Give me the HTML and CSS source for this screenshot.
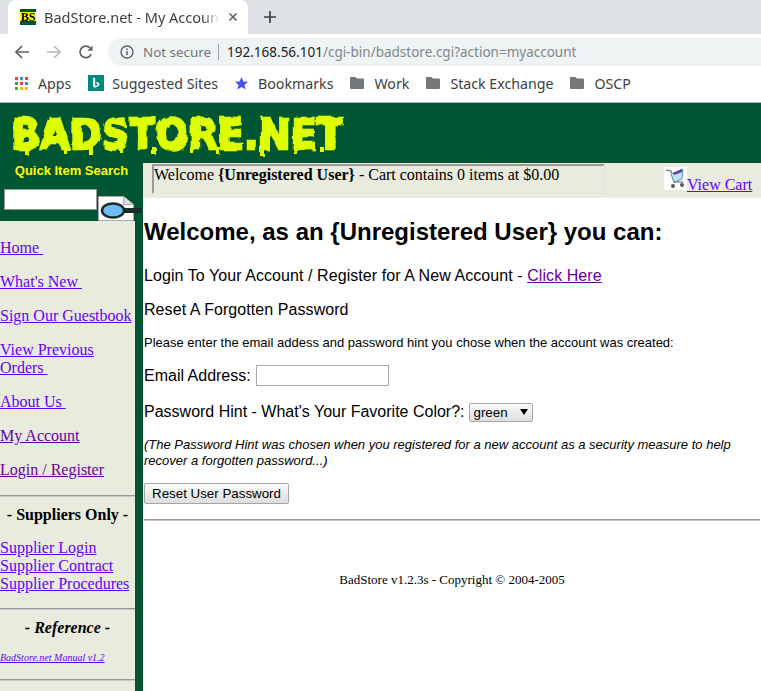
FILE: index.html

```html
<!DOCTYPE html>
<html lang="en">
<head>
    <meta charset="UTF-8">
    <title>BadStore.net - My Account</title>
    <link rel="stylesheet" href="styles.css">
</head>
<body>
    <div class="chrome">
        <div class="tabstrip">
            <div class="tab">
                <span class="favicon">BS</span>
                <span class="tab-title">BadStore.net - My Account</span>
                <svg class="tab-close" width="10" height="10" viewBox="0 0 10 10"><path d="M1.5 1.5l7 7M8.5 1.5l-7 7" stroke="#5f6368" stroke-width="1.6" fill="none"/></svg>
            </div>
            <svg class="new-tab" width="14" height="14" viewBox="0 0 14 14"><path d="M7 1v12M1 7h12" stroke="#3c4043" stroke-width="1.7" fill="none"/></svg>
        </div>
        <div class="toolbar">
            <svg class="nav-icon" width="16" height="16" viewBox="0 0 16 16"><path d="M15 8H2M8 2L2 8l6 6" stroke="#5f6368" stroke-width="1.7" fill="none"/></svg>
            <svg class="nav-icon" width="16" height="16" viewBox="0 0 16 16"><path d="M1 8h13M8 2l6 6-6 6" stroke="#b6b8bb" stroke-width="1.7" fill="none"/></svg>
            <svg class="nav-icon" width="16" height="16" viewBox="0 0 16 16"><path d="M13.2 10.2A5.8 5.8 0 1 1 12.2 4" stroke="#5f6368" stroke-width="1.7" fill="none"/><path d="M14.5 1.5v5.2H9.3z" fill="#5f6368"/></svg>
            <div class="omnibox">
                <svg width="14" height="14" viewBox="0 0 14 14"><circle cx="7" cy="7" r="6" stroke="#5f6368" stroke-width="1.4" fill="none"/><path d="M7 6v4.2" stroke="#5f6368" stroke-width="1.5"/><circle cx="7" cy="4.1" r=".9" fill="#5f6368"/></svg>
                <span class="not-secure">Not secure</span>
                <span class="omni-sep"></span>
                <span class="url"><b>192.168.56.101</b>/cgi-bin/badstore.cgi?action=myaccount</span>
            </div>
        </div>
        <div class="bookmarks">
            <span class="bookmark">
                <svg width="13" height="13" viewBox="0 0 13 13">
                    <rect x="0" y="0" width="3" height="3" fill="#ea4335"/><rect x="5" y="0" width="3" height="3" fill="#4285f4"/><rect x="10" y="0" width="3" height="3" fill="#ea4335"/>
                    <rect x="0" y="5" width="3" height="3" fill="#34a853"/><rect x="5" y="5" width="3" height="3" fill="#ea4335"/><rect x="10" y="5" width="3" height="3" fill="#4285f4"/>
                    <rect x="0" y="10" width="3" height="3" fill="#34a853"/><rect x="5" y="10" width="3" height="3" fill="#fbbc05"/><rect x="10" y="10" width="3" height="3" fill="#fbbc05"/>
                </svg>
                Apps
            </span>
            <span class="bookmark bing">
                <svg width="16" height="16" viewBox="0 0 16 16"><rect width="16" height="16" fill="#00897b"/><path d="M5 2.5v9l2.2 1.3 4-2.4V8L8 6.8l1 2.4 1 .5-2.8 1.5V3.300z" fill="#fff"/></svg>
                Suggested Sites
            </span>
            <span class="bookmark">
                <svg width="13" height="13" viewBox="0 0 13 13"><path d="M6.500 0l1.900 4.400 4.600.4-3.500 3.100 1.100 4.700-4.100-2.500-4.100 2.500 1.100-4.700L0 4.800l4.600-.4z" fill="#4a4ff0"/></svg>
                Bookmarks
            </span>
            <span class="bookmark"><svg width="14" height="12" viewBox="0 0 14 12"><path d="M1 0h4.500l1.500 1.500h6a1 1 0 0 1 1 1V11a1 1 0 0 1-1 1H1a1 1 0 0 1-1-1V1a1 1 0 0 1 1-1z" fill="#74777a"/></svg>Work</span>
            <span class="bookmark"><svg width="14" height="12" viewBox="0 0 14 12"><path d="M1 0h4.500l1.500 1.500h6a1 1 0 0 1 1 1V11a1 1 0 0 1-1 1H1a1 1 0 0 1-1-1V1a1 1 0 0 1 1-1z" fill="#74777a"/></svg>Stack Exchange</span>
            <span class="bookmark"><svg width="14" height="12" viewBox="0 0 14 12"><path d="M1 0h4.500l1.500 1.500h6a1 1 0 0 1 1 1V11a1 1 0 0 1-1 1H1a1 1 0 0 1-1-1V1a1 1 0 0 1 1-1z" fill="#74777a"/></svg>OSCP</span>
        </div>
    </div>

    <div class="site">
        <div class="banner">
            <svg class="logo" width="345" height="52" viewBox="0 0 345 52">
                <defs>
                    <filter id="slime" x="-5%" y="-15%" width="110%" height="130%">
                        <feTurbulence type="fractalNoise" baseFrequency="0.08" numOctaves="2" seed="4"/>
                        <feDisplacementMap in="SourceGraphic" scale="5"/>
                    </filter>
                </defs>
                <g filter="url(#slime)" fill="#ddff00">
                    <text class="logo-text" x="9" y="38" textLength="332" lengthAdjust="spacingAndGlyphs">BADSTORE.NET</text>
                    <path d="M22 36h4v8h-4zM62 36h3v7h-3zM88 36h4v9h-4zM118 36h3v6h-3zM150 36h4v8h-4zM188 36h3v6h-3zM215 36h3v8h-3zM258 36h4v9h-4zM292 36h3v7h-3zM318 36h4v5h-4z"/>
                </g>
            </svg>
        </div>
        <div class="layout">
            <div class="left">
                <div class="search">
                    <div class="search-title">Quick Item Search</div>
                    <div class="search-row">
                        <input class="search-box" type="text">
                        <svg class="search-btn" width="44" height="25" viewBox="0 0 44 25">
                            <path d="M.5.5h25l10 8v16H.5z" fill="#fff" stroke="#aaa"/>
                            <path d="M25.500.5v8h10" fill="#ddd" stroke="#aaa"/>
                            <rect x="26" y="12" width="17" height="5" fill="#1c2a2a"/>
                            <ellipse cx="15" cy="14.500" rx="11" ry="7" fill="#6cbcf5" stroke="#1c2a2a" stroke-width="2.500"/>
                        </svg>
                    </div>
                </div>
                <nav class="sidebar">
                    <p><a href="#">Home&nbsp;</a></p>
                    <p><a href="#">What's New&nbsp;</a></p>
                    <p><a href="#">Sign Our Guestbook</a></p>
                    <p><a href="#">View Previous Orders&nbsp;</a></p>
                    <p><a href="#">About Us&nbsp;</a></p>
                    <p><a class="seen" href="#">My Account</a></p>
                    <p><a class="seen" href="#">Login / Register</a></p>
                    <hr>
                    <h4 class="side-head">- Suppliers Only -</h4>
                    <p class="side-list">
                        <a href="#">Supplier Login</a><br>
                        <a href="#">Supplier Contract</a><br>
                        <a href="#">Supplier Procedures</a>
                    </p>
                    <hr>
                    <h4 class="side-head ref">- Reference -</h4>
                    <p class="manual"><a href="#">BadStore.net Manual v1.2</a></p>
                    <hr>
                </nav>
            </div>
            <main class="main">
                <div class="welcome-bar">
                    <div class="welcome-box">Welcome <b>{Unregistered User}</b> - Cart contains 0 items at $0.00</div>
                    <div class="cart">
                        <svg width="23" height="23" viewBox="0 0 23 23">
                            <rect width="23" height="23" fill="#fff"/>
                            <path d="M2 3l5 1 3 11h9" stroke="#8a8f96" stroke-width="1.500" fill="none"/>
                            <path d="M7 7l12-5-1 10-8 3z" fill="#bfe6ef" stroke="#6d8fb0"/>
                            <path d="M9 6l9-4v3l-8 3z" fill="#5a3ab5"/>
                            <circle cx="9" cy="19" r="2" fill="#555"/><circle cx="18" cy="18" r="2" fill="#555"/>
                        </svg><a href="#">View Cart</a>
                    </div>
                </div>
                <div class="content">
                    <h1>Welcome, as an {Unregistered User} you can:</h1>
                    <p class="line">Login To Your Account / Register for A New Account - <a class="seen" href="#">Click Here</a></p>
                    <p class="line">Reset A Forgotten Password</p>
                    <p class="small">Please enter the email addess and password hint you chose when the account was created:</p>
                    <form>
                        <div class="field email-field">Email Address: <input class="email" type="text"></div>
                        <div class="field hint">Password Hint - What's Your Favorite Color?:
                            <span class="select-wrap"><select><option>green</option><option>blue</option><option>red</option></select></span>
                        </div>
                        <p class="note">(The Password Hint was chosen when you registered for a new account as a security measure to help recover a forgotten password...)</p>
                        <button type="button" class="reset">Reset User Password</button>
                    </form>
                    <hr class="main-rule">
                    <p class="footer">BadStore v1.2.3s - Copyright &copy; 2004-2005</p>
                </div>
            </main>
        </div>
    </div>
</body>
</html>
```

FILE: styles.css

```css
* {
    box-sizing: border-box;
}

html, body {
    height: 100%;
}

body {
    margin: 0;
    overflow: hidden;
    display: flex;
    flex-direction: column;
    font-family: "Liberation Serif", serif;
    font-size: 16px;
    color: #000;
    background: #fff;
}

/* browser chrome */
.chrome {
    flex: none;
    font-family: "Noto Sans", sans-serif;
    overflow: hidden;
}

.tabstrip {
    height: 34px;
    background: #dee1e6;
    display: flex;
    align-items: center;
}

.tab {
    width: 240px;
    height: 34px;
    margin-left: 8px;
    padding: 0 0 0 12px;
    background: #fff;
    border-radius: 8px 8px 0 0;
    display: flex;
    align-items: center;
}

.favicon {
    width: 16px;
    height: 16px;
    flex: none;
    color: #000;
    font: bold 12px/16px "Liberation Serif", serif;
    text-align: center;
    background: linear-gradient(#005533 3px, #ffff00 3px, #ffff00 12px, #005533 12px);
}

.tab-title {
    width: 176px;
    margin-left: 8px;
    font-size: 14.5px;
    color: #3c4043;
    white-space: nowrap;
    overflow: hidden;
    -webkit-mask-image: linear-gradient(to right, #000 90%, transparent);
    mask-image: linear-gradient(to right, #000 90%, transparent);
}

.tab-close {
    margin-left: 8px;
}

.new-tab {
    margin-left: 15px;
}

.toolbar {
    height: 33px;
    background: #fff;
    display: flex;
    align-items: center;
    padding: 3px 0 0 14px;
}

.nav-icon {
    margin-right: 16px;
    flex: none;
}

.omnibox {
    flex: 1;
    height: 28px;
    margin-left: -2px;
    margin-right: -20px;
    padding-left: 12px;
    background: #f0f3f4;
    border-radius: 14px 0 0 14px;
    display: flex;
    align-items: center;
    font-size: 13.5px;
    white-space: nowrap;
    color: #80868b;
}

.not-secure {
    margin-left: 9px;
    font-size: 13.4px;
    color: #70757a;
}

.omni-sep {
    width: 1px;
    height: 16px;
    margin: 0 8px 0 7px;
    background: #9aa0a6;
}

.url b {
    font-weight: 400;
    color: #202124;
}

.bookmarks {
    height: 36px;
    background: #fff;
    border-bottom: 1px solid #b5b5b5;
    display: flex;
    align-items: center;
    padding: 0 0 3px 15px;
    gap: 17px;
    font-size: 14.2px;
    color: #3c4043;
    white-space: nowrap;
}

.bookmark {
    display: flex;
    align-items: center;
    gap: 10px;
}

.bing {
    gap: 8px;
}

/* site */
.site {
    flex: 1;
    min-height: 0;
    display: flex;
    flex-direction: column;
    background: #005533;
}

.banner {
    height: 60px;
    flex: none;
    padding: 8px 0 0 2px;
}

.logo {
    display: block;
}

.logo-text {
    font-family: "DejaVu Sans", sans-serif;
    font-weight: bold;
    font-size: 42px;
    stroke: #ddff00;
    stroke-width: 2.5px;
}

.layout {
    flex: 1;
    min-height: 0;
    display: flex;
}

.left {
    width: 143px;
    flex: none;
    display: flex;
    flex-direction: column;
}

.search {
    height: 58px;
    flex: none;
}

.search-title {
    height: 26px;
    font: bold 13px/16px "Liberation Sans", sans-serif;
    color: #ffff00;
    text-align: center;
}

.search-row {
    display: flex;
    padding-left: 4px;
    align-items: flex-start;
}

.search-box {
    width: 93px;
    height: 21px;
    border: 1px solid #9a9a9a;
    background: #fff;
    margin: 0;
    display: block;
}

.search-btn {
    margin: 7px 0 0 1px;
    flex: none;
}

.sidebar {
    width: 135px;
    flex: 1;
    min-height: 0;
    background: #e8ebdd;
    padding-top: 18px;
}

.sidebar p {
    margin: 0 0 16px;
    line-height: 18px;
}

.sidebar .side-list {
    margin-bottom: 15px;
}

.sidebar hr, .main-rule {
    height: 2px;
    margin: 0;
    border: 0;
    border-top: 1px solid #999;
    border-bottom: 1px solid #c9c9c9;
}

.side-head {
    margin: 9px 0 15px;
    font-size: 16px;
    line-height: 18px;
    text-align: center;
}

.ref {
    font-style: italic;
}

.sidebar .manual {
    margin: 11px 0 15px;
    font-size: 10px;
    font-style: italic;
    line-height: 12px;
}

a {
    color: #6600ff;
}

a.seen {
    color: #660099;
}

.main {
    flex: 1;
    min-width: 0;
    background: #fff;
}

.welcome-bar {
    height: 35px;
    background: #e8ebdd;
    display: flex;
    padding: 1px 0 0 9px;
}

.welcome-box {
    width: 453px;
    height: 30px;
    border: 2px solid;
    border-color: #999 #e4e6dc #e4e6dc #999;
    line-height: 18px;
    white-space: nowrap;
}

.cart {
    margin-left: 59px;
    padding-top: 3px;
    line-height: 18px;
    white-space: nowrap;
}

.content {
    padding-left: 1px;
    font-family: "Liberation Sans", sans-serif;
}

h1 {
    margin: 20px 0 0;
    font-size: 24px;
    line-height: 28px;
}

.line {
    margin: 21px 0 0;
    line-height: 18px;
    letter-spacing: .07px;
}

.line + .line {
    margin-top: 16px;
}

.small {
    margin: 16px 0 0;
    font-size: 13px;
    line-height: 15px;
}

.field {
    margin-top: 14px;
    height: 21px;
    display: flex;
    align-items: center;
    gap: 4px;
}

.hint {
    padding-top: 2px;
}

.email-field {
    margin-top: 15px;
    gap: 5px;
}

.email {
    width: 133px;
    height: 21px;
    margin: 0;
    border: 1px solid #a9a9a9;
    background: #fff;
}

.select-wrap {
    position: relative;
    display: block;
    width: 64px;
    height: 19px;
    margin-top: 1px;
}

.select-wrap::after {
    content: "";
    position: absolute;
    right: 5px;
    top: 6px;
    border: 4px solid transparent;
    border-top: 6px solid #000;
    border-bottom: 0;
    pointer-events: none;
}

.select-wrap select {
    appearance: none;
    -webkit-appearance: none;
    display: block;
    width: 100%;
    height: 100%;
    margin: 0;
    padding: 0 0 0 4px;
    border: 1px solid #a6a6a6;
    border-radius: 2px;
    background: linear-gradient(#fafafa, #dedede);
    font: 13.33px "Liberation Sans", sans-serif;
    color: #000;
}

.note {
    margin: 16px 0 0;
    font-size: 13px;
    font-style: italic;
    line-height: 16px;
}

.reset {
    display: block;
    width: 145px;
    height: 21px;
    margin: 14px 0 0;
    padding: 0;
    border: 1px solid #a6a6a6;
    border-radius: 2px;
    background: linear-gradient(#fafafa, #dedede);
    font: 13.33px "Liberation Sans", sans-serif;
    color: #000;
}

.main-rule {
    margin-top: 15px;
    width: 616px;
}

.footer {
    margin: 51px 0 0;
    width: 616px;
    text-align: center;
    font: 13px/15px "Liberation Serif", serif;
}
```
